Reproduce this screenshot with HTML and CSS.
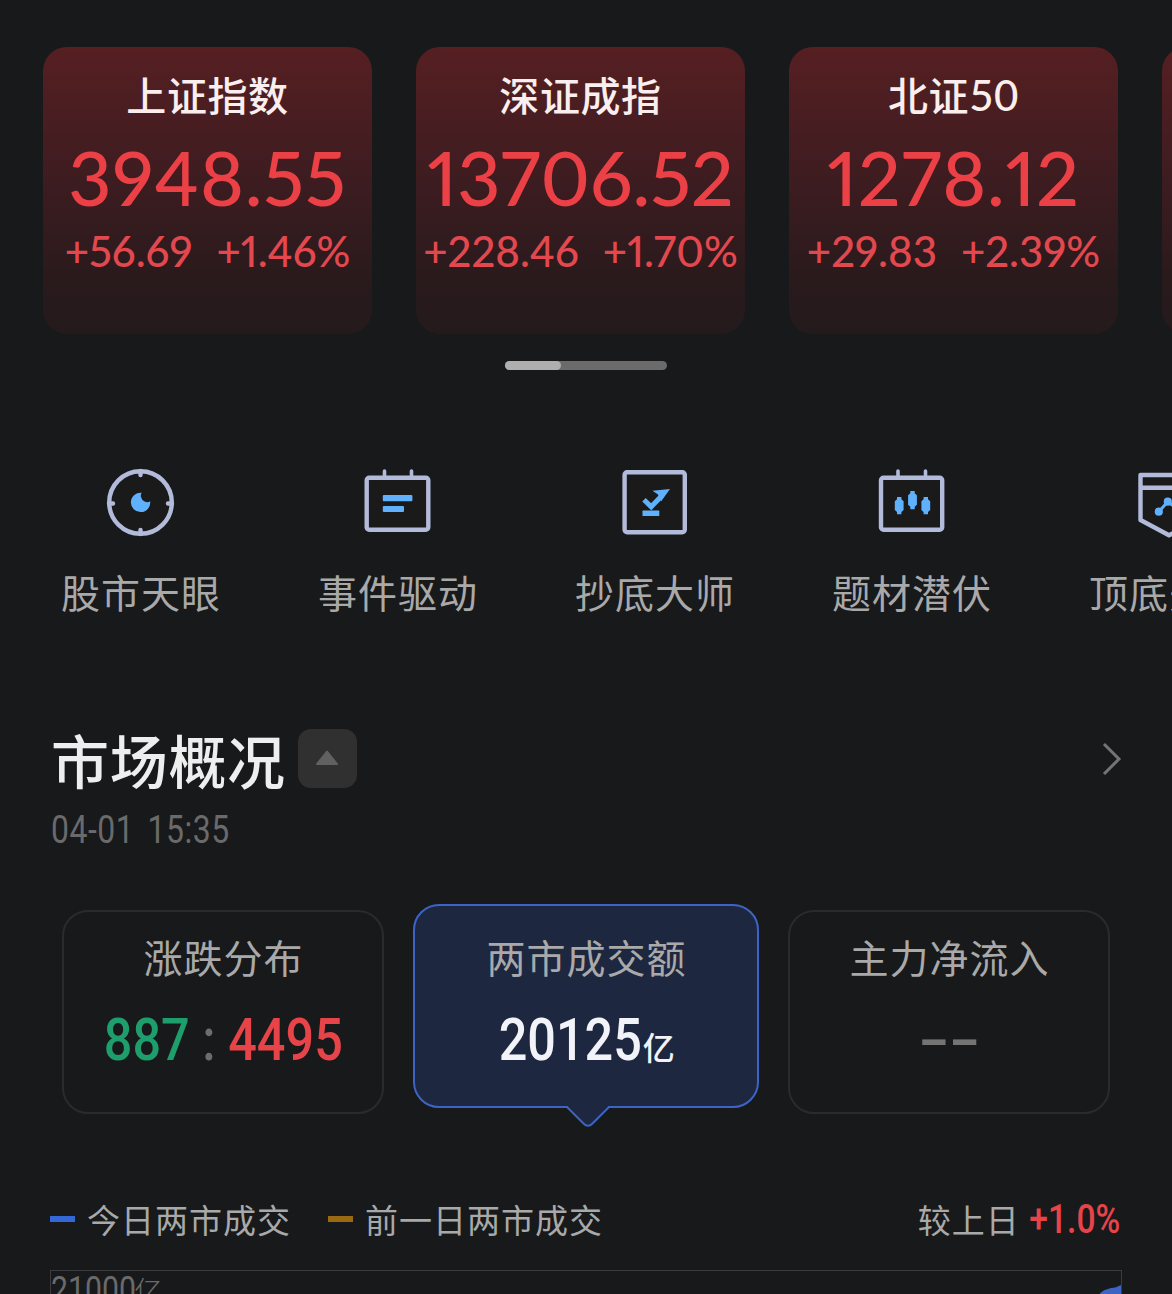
FILE: index.html
```html
<!DOCTYPE html>
<html lang="zh-CN">
<head>
  <meta charset="UTF-8">
  <meta name="viewport" content="width=device-width, initial-scale=1.0">
  <title>市场概况</title>
  <link rel="stylesheet" href="styles.css">
</head>
<body>
  <div class="indices">
    <div class="index-card">
      <div class="index-name">上证指数</div>
      <div class="index-value wide">3948.55</div>
      <div class="index-change"><span>+56.69</span><span>+1.46%</span></div>
    </div>
    <div class="index-card">
      <div class="index-name">深证成指</div>
      <div class="index-value">13706.52</div>
      <div class="index-change"><span>+228.46</span><span>+1.70%</span></div>
    </div>
    <div class="index-card">
      <div class="index-name">北证<span class="index-num">50</span></div>
      <div class="index-value wide">1278.12</div>
      <div class="index-change"><span>+29.83</span><span>+2.39%</span></div>
    </div>
    <div class="index-card"></div>
  </div>
  <div class="scroll-track"><div class="scroll-thumb"></div></div>

  <div class="tools">
    <div class="tool">
      <svg class="tool-icon" viewBox="0 0 72 72">
        <circle class="frame" cx="35.5" cy="35.5" r="31.3"/>
        <path class="frame" d="M35.5 4v4M35.5 63v4M4 36.5h4M63 36.5h4"/>
        <path class="mark" d="M36.8 25.8A9.7 9.7 0 1 0 45.2 34.2Q43 36 40 34.8Q36.5 33 35.8 29.5Q35.7 27 36.8 25.8Z"/>
      </svg>
      <div class="tool-name">股市天眼</div>
    </div>
    <div class="tool">
      <svg class="tool-icon" viewBox="0 0 72 72">
        <path class="frame pin" d="M22.5 4v6M49.5 4v6"/>
        <rect class="frame" x="4.7" y="10.8" width="61.6" height="52" rx="2.5"/>
        <rect class="mark" x="20.8" y="28" width="29.6" height="6.3" rx="1"/>
        <rect class="mark" x="20.8" y="39" width="21.2" height="6" rx="1"/>
      </svg>
      <div class="tool-name">事件驱动</div>
    </div>
    <div class="tool">
      <svg class="tool-icon" viewBox="0 0 72 72">
        <rect class="frame" x="5.6" y="5.3" width="60.2" height="60" rx="2.5"/>
        <path class="tick" d="M25 32.8L32.2 39.8L43.5 28"/>
        <path class="mark" d="M33.5 23.8L51 22L42 34.5L39 27.5Z"/>
        <rect class="mark" x="23.5" y="43.6" width="16.8" height="5.4" rx="0.6"/>
      </svg>
      <div class="tool-name">抄底大师</div>
    </div>
    <div class="tool">
      <svg class="tool-icon" viewBox="0 0 72 72">
        <path class="frame pin" d="M22 4v6M49.5 4v6"/>
        <rect class="frame" x="5" y="10.8" width="61.2" height="52" rx="2.5"/>
        <path class="mark" d="M21 30h4.4v2.2l2.2 2v8.8l-2.2 2v2.3H21V45l-2.2-2v-8.8l2.2-2z"/>
        <path class="mark" d="M34.3 24h4.4v2.2l2.2 2v9.6l-2.2 2v2.5h-4.4v-2.5l-2.2-2v-9.6l2.2-2z"/>
        <path class="mark" d="M47.6 30H52v2.2l2.2 2v8.8L52 45v2.3h-4.4V45l-2.2-2v-8.8l2.2-2z"/>
      </svg>
      <div class="tool-name">题材潜伏</div>
    </div>
    <div class="tool">
      <svg class="tool-icon" viewBox="0 0 72 72">
        <path class="frame" d="M7.5 8H65v45L36 68.3L7.5 53ZM7.5 20.7H65"/>
        <path class="link" d="M25.8 44.7L34.8 34.7L46 43"/>
        <circle class="mark" cx="25.8" cy="44.7" r="4.1"/>
        <circle class="mark" cx="34.8" cy="34.7" r="4.1"/>
      </svg>
      <div class="tool-name">顶底先锋</div>
    </div>
  </div>

  <div class="market">
    <div class="market-header">
      <div class="market-title">市场概况</div>
      <div class="collapse">
        <svg width="24" height="16" viewBox="0 0 24 16"><path d="M12 1.5L22 14H2Z"/></svg>
      </div>
      <svg class="more" width="20" height="34" viewBox="0 0 20 34"><path d="M2 2L17 17L2 32"/></svg>
    </div>
    <div class="market-time"><span class="narrow">04-01 15:35</span></div>
  </div>

  <div class="stats">
    <div class="stat">
      <div class="stat-name">涨跌分布</div>
      <div class="stat-value"><span class="narrow"><span class="down">887</span><span class="colon">:</span><span class="up">4495</span></span></div>
    </div>
    <div class="stat active">
      <div class="stat-name">两市成交额</div>
      <div class="stat-value"><span class="narrow">20125</span><span class="unit">亿</span></div>
      <svg class="pointer" width="50" height="24" viewBox="0 0 50 24">
        <path class="pointer-fill" d="M2 0L4 2L20.5 19Q25 23 29.5 19L46 2L48 0Z"/>
        <path class="pointer-line" d="M1 3H4L20.5 19.5Q25 24 29.5 19.5L46 3H49"/>
      </svg>
    </div>
    <div class="stat">
      <div class="stat-name">主力净流入</div>
      <div class="stat-value"><span class="none">--</span></div>
    </div>
  </div>

  <div class="legend">
    <span class="dash today"></span>
    <span class="legend-name">今日两市成交</span>
    <span class="dash yesterday"></span>
    <span class="legend-name">前一日两市成交</span>
    <span class="compare">较上日</span>
    <span class="compare-value"><span class="narrow">+1.0%</span></span>
  </div>
  <div class="chart">
    <div class="axis"><span class="narrow">21000</span><span class="axis-unit">亿</span></div>
    <svg class="line" width="26" height="12" viewBox="0 0 26 12"><path d="M2 12C8 4 11 5 16 3C20 3 22 2 26 0V12Z"/></svg>
  </div>
</body>
</html>
```
FILE: styles.css
```css
body {
  margin: 0;
  height: 1294px;
  overflow: hidden;
  background-color: #18191b;
  color: #a9a9a9;
  font-family: "Noto Sans CJK SC", sans-serif;
}
.indices {
  display: flex;
  gap: 44px;
  padding: 47px 0 0 43px;
  overflow: hidden;
}
.index-card {
  flex: 0 0 329px;
  box-sizing: border-box;
  height: 287px;
  padding-top: 17px;
  border-radius: 24px;
  background: linear-gradient(#561f22, #3b1c20 50%, #2a1a1c 80%, #241a1c);
  display: flex;
  flex-direction: column;
  align-items: center;
  white-space: nowrap;
}
.index-name {
  font-size: 40px;
  font-weight: 500;
  line-height: 60px;
  letter-spacing: 0.6px;
  color: #faeeee;
}
.index-num {
  font-family: Lato, sans-serif;
  font-size: 42px;
  line-height: 1;
}
.index-value {
  font-family: Lato, sans-serif;
  font-size: 75px;
  font-weight: 500;
  line-height: 107px;
  font-kerning: none;
  font-variant-numeric: proportional-nums;
  color: #ea4046;
}
.wide {
  letter-spacing: 0.8px;
}
.index-change {
  display: flex;
  gap: 24px;
  font-family: Lato, sans-serif;
  font-size: 42px;
  font-weight: 500;
  line-height: 40px;
  font-kerning: none;
  font-variant-numeric: proportional-nums;
  color: #e2484e;
}
.scroll-track {
  width: 162px;
  height: 9px;
  margin: 27px auto 0;
  border-radius: 5px;
  background-color: #6b6b6c;
}
.scroll-thumb {
  width: 56px;
  height: 9px;
  border-radius: 5px;
  background-color: #afafaf;
}
.tools {
  display: flex;
  padding: 97px 0 0 12px;
  overflow: hidden;
}
.tool {
  flex: 0 0 257px;
  display: flex;
  flex-direction: column;
  align-items: center;
}
.tool-icon {
  width: 72px;
  height: 72px;
}
.frame {
  fill: #1a1a1b;
  stroke: #b3bbdb;
  stroke-width: 4.4;
  stroke-linecap: round;
  stroke-linejoin: round;
}
.pin {
  stroke-width: 3.6;
}
.mark {
  fill: #5fb1fb;
}
.tick, .link {
  fill: none;
  stroke: #5fb1fb;
  stroke-width: 5;
}
.link {
  stroke-width: 3;
}
.tool-name {
  margin-top: 22px;
  padding-left: 1px;
  font-size: 39px;
  line-height: 60px;
  letter-spacing: 1px;
}
.market {
  padding: 108px 50px 0 51px;
}
.market-header {
  display: flex;
  align-items: center;
  height: 59px;
}
.market-title {
  padding-top: 2px;
  font-size: 58px;
  font-weight: 500;
  line-height: 59px;
  letter-spacing: 0.7px;
  color: #eeeeee;
}
.collapse {
  display: flex;
  justify-content: center;
  align-items: center;
  box-sizing: border-box;
  width: 59px;
  height: 59px;
  padding-bottom: 2px;
  margin-left: 12px;
  border-radius: 13px;
  background-color: #303031;
}
.collapse path {
  fill: #616162;
  stroke: #616162;
  stroke-width: 2;
  stroke-linejoin: round;
}
.more {
  margin-left: auto;
}
.more path {
  fill: none;
  stroke: #747475;
  stroke-width: 3;
}
.narrow {
  display: inline-block;
  transform: scaleX(0.84);
}
.market-time {
  margin-top: 20px;
  font-family: Roboto, sans-serif;
  font-size: 38px;
  font-weight: 400;
  line-height: 44px;
  letter-spacing: 0.6px;
  word-spacing: 6px;
  color: #6a6a6b;
}
.market-time .narrow {
  transform-origin: left;
}
.stats {
  display: flex;
  gap: 29px;
  padding: 58px 62px 0;
}
.stat {
  flex: 0 0 322px;
  box-sizing: border-box;
  height: 204px;
  padding-top: 14px;
  border: 2px solid #2a2b2d;
  border-radius: 26px;
  text-align: center;
}
.stat.active {
  position: relative;
  flex-basis: 346px;
  margin-top: -6px;
  padding-top: 20px;
  border-color: #3d64c4;
  background-color: #1e2740;
}
.stat-name {
  padding-left: 1px;
  font-size: 39px;
  line-height: 60px;
  letter-spacing: 1px;
}
.stat-value {
  display: flex;
  justify-content: center;
  align-items: baseline;
  height: 100px;
  font-family: Roboto, sans-serif;
  font-size: 60px;
  font-weight: 500;
  line-height: 108px;
}
.down {
  color: #1e9e6c;
}
.colon {
  margin: 0 15px;
  color: #6d6d6e;
}
.up {
  color: #e7444a;
}
.active .stat-value {
  color: #f2f3f8;
}
.unit {
  margin: 0 12px 0 -13px;
  font-family: "Noto Sans CJK SC", sans-serif;
  font-size: 32px;
  line-height: 1;
}
.none {
  display: inline-block;
  transform: scaleX(1.5);
  line-height: 108px;
  color: #747475;
}
/* small arrow under the selected card, covers its bottom border */
.pointer {
  position: absolute;
  left: 148px;
  top: 198px;
}
.pointer-fill {
  fill: #1e2740;
}
.pointer-line {
  fill: none;
  stroke: #3d64c4;
  stroke-width: 2;
}
.legend {
  display: flex;
  align-items: center;
  height: 60px;
  margin-top: 75px;
  padding: 0 52px 0 50px;
  font-size: 33px;
  line-height: 60px;
  letter-spacing: 1px;
}
.dash {
  width: 25px;
  height: 6px;
  margin-right: 12px;
}
.today {
  background-color: #3468d6;
}
.yesterday {
  margin-left: 37px;
  background-color: #9a6a12;
}
.compare {
  margin-left: auto;
}
.compare-value {
  margin-left: -8px;
  padding-top: 2px;
  font-family: Roboto, sans-serif;
  font-size: 40px;
  font-weight: 500;
  letter-spacing: 0;
  color: #e7444a;
}
.compare-value .narrow {
  transform-origin: right;
}
.chart {
  position: relative;
  height: 23px;
  margin: 21px 50px 0;
  border: 1px solid #3c3c3e;
  border-bottom: none;
  overflow: hidden;
}
.axis {
  display: flex;
  align-items: baseline;
  font-family: Roboto, sans-serif;
  font-size: 36px;
  font-weight: 400;
  line-height: 38px;
  color: #6a6a6b;
}
.axis .narrow {
  transform-origin: left;
}
.axis-unit {
  margin-left: -18px;
  font-family: "Noto Sans CJK SC", sans-serif;
  font-size: 28px;
  font-weight: 300;
  line-height: 1;
}
.line {
  position: absolute;
  right: 0;
  top: 14px;
}
.line path {
  fill: #3d64c4;
}
```
